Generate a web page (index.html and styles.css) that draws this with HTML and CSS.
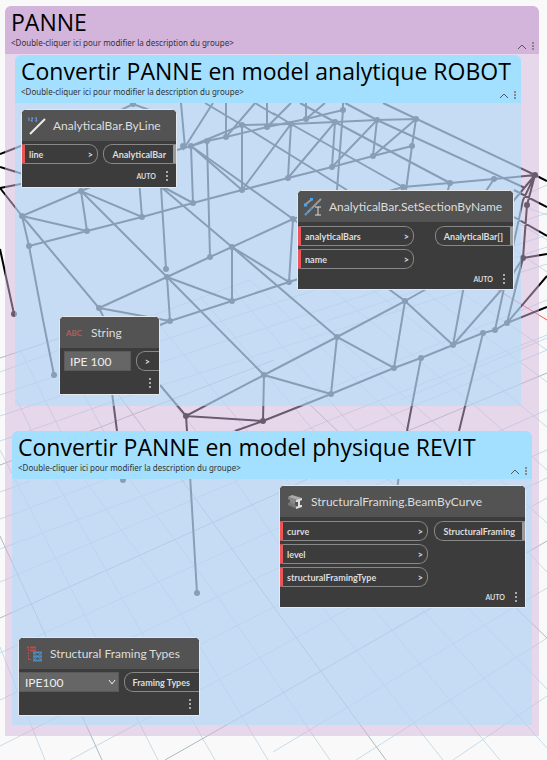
FILE: index.html
```
<!DOCTYPE html>
<html lang="fr">
<head>
<meta charset="utf-8">
<meta name="viewport" content="width=device-width, initial-scale=1">
<title>PANNE</title>
<link rel="stylesheet" href="styles.css">
</head>
<body>
<main class="workspace">
  <svg class="scene" viewBox="0 0 547 760" preserveAspectRatio="xMinYMin slice" aria-hidden="true">
    <g class="grid">
      <path d="M0 492L30 481M0 519L110 478L240 428M0 549L190 478L330 420L547 335M0 582L274 465L547 350M0 653L274 530L547 410M0 700L274 570L547 450M0 746L274 607L547 478M70 760L274 650L547 498M273 752L513 608L547 588M356 760L547 638M453 760L547 696"/>
      <path d="M0 441L140 392L547 264M0 416L120 376L547 235M0 395L140 348L300 295L547 213M0 372L140 320L250 280M300 330L547 247M300 400L547 300M400 400L547 338"/>
      <path d="M0 647L45 760M0 450L77 600L158 760M17 400L55 480L123 600L215 760M20 350L85 480L172 600L268 760M60 350L130 480L220 600L330 760M115 330L235 480L323 608L443 760M155 320L280 470L373 608L500 760M200 296L330 450L421 608L547 748M230 286L390 470L468 608L547 689M250 280L440 460L547 572M280 288L500 480L547 523M330 288L480 410L547 470M370 288L500 388L547 427M420 288L547 382M455 288L547 350M500 240L547 272M505 215L547 240M525 195L547 185M520 205L547 215"/>
    </g>
    <g class="grid grid-major">
      <path d="M0 618L274 495L410 430L547 373M165 760L274 698L431 608L547 541M0 465L93 430L274 360M0 358L60 338M0 536L34 610L102 760M100 370L182 480L273 606L386 760M305 400L410 500L516 608L547 638"/>
    </g>
    <path class="axis" d="M493 287L547 320"/>
    <g class="bars">
      <path d="M117 112L133 104L155 112M181 103L185 148M226 103V137M213 103L183 150M205 103L242 125L347 190M226 137L255 103L275 115M267 103V127L291 103M300 103L335 122L450 183M273 113L291 124L403 187M306 103V119L325 103M343 103V110M343 110L337 190M345 103L377 120L525 188M383 103L535 175"/>
      <path d="M177 150L191 146L207 141L226 137L267 127L306 119L343 110M191 146L242 125L291 124L335 122L377 120L416 119L412 146L406 190"/>
      <path d="M242 125V190L291 124L288 178L335 122L332 167L377 120L373 156L416 119"/>
      <path d="M29 246L87 231L142 217L193 203L242 190L288 178L332 167L373 156L412 146M191 146L193 203M207 141L210 257M191 146L242 190M191 146L293 219L405 301L453 345M22 216L81 191L100 183M22 216L87 231L81 191L142 217L139 180M161 187L166 269M161 187L232 247M150 180L193 203M81 191L167 277L264 375L331 394M22 216L99 308L105 320M22 216L29 246L43 320L54 375"/>
      <path d="M99 308L167 277L210 257L232 247L293 219L403 187L450 183L494 179L535 175M293 219L289 282L232 247V301L167 277L170 321L99 308M160 325L170 321L232 301L289 282L320 272M232 247L337 337L394 368L405 301L337 337L331 394M403 187L398 200M450 183L445 200M494 179L480 200M428 288L405 301M453 345L465 280M453 345L510 280M337 337L264 375L186 416L160 385M264 375L263 421L186 416L187 431M111 385L117 431M235 431L263 421L331 394L394 368L421 358L453 345L483 333L495 330L507 323L547 307M421 358L407 431M483 333L459 431M495 330L523 200L535 175M507 323L523 258L527 205L535 175L510 205M523 258L515 288M523 258L547 254M535 175L547 181M514 190L547 207M514 217L547 236M523 258L504 288M547 276L507 323"/>
      <path d="M0 154L26 144M0 167L26 175M0 188L26 183M0 188L22 216M0 249L14 314M190 475L197 593M399 475L397 490"/>
    </g>
    <g class="joints">
      <circle cx="133" cy="104" r="3"/><circle cx="183" cy="146" r="3"/><circle cx="191" cy="146" r="3"/><circle cx="207" cy="141" r="3"/><circle cx="226" cy="137" r="3"/><circle cx="242" cy="125" r="3"/><circle cx="267" cy="127" r="3"/><circle cx="291" cy="124" r="3"/><circle cx="306" cy="119" r="3"/><circle cx="343" cy="110" r="3"/><circle cx="335" cy="122" r="3"/><circle cx="377" cy="120" r="3"/><circle cx="416" cy="119" r="3"/><circle cx="412" cy="146" r="3"/><circle cx="373" cy="156" r="3"/><circle cx="332" cy="167" r="3"/><circle cx="288" cy="178" r="3"/><circle cx="242" cy="190" r="3"/><circle cx="193" cy="203" r="3"/><circle cx="142" cy="217" r="3"/><circle cx="87" cy="231" r="3"/><circle cx="29" cy="246" r="3"/><circle cx="22" cy="216" r="3"/><circle cx="81" cy="191" r="3"/><circle cx="166" cy="269" r="3"/><circle cx="167" cy="277" r="3"/><circle cx="210" cy="257" r="3"/><circle cx="232" cy="247" r="3"/><circle cx="232" cy="301" r="3"/><circle cx="99" cy="308" r="3"/><circle cx="170" cy="321" r="3"/><circle cx="289" cy="282" r="3"/><circle cx="293" cy="219" r="3"/><circle cx="403" cy="187" r="3"/><circle cx="450" cy="183" r="3"/><circle cx="494" cy="179" r="3"/><circle cx="535" cy="175" r="3"/><circle cx="527" cy="205" r="3"/><circle cx="523" cy="258" r="3"/><circle cx="405" cy="301" r="3"/><circle cx="337" cy="337" r="3"/><circle cx="264" cy="375" r="3"/><circle cx="331" cy="394" r="3"/><circle cx="394" cy="368" r="3"/><circle cx="421" cy="358" r="3"/><circle cx="453" cy="345" r="3"/><circle cx="483" cy="333" r="3"/><circle cx="495" cy="330" r="3"/><circle cx="507" cy="323" r="3"/><circle cx="186" cy="416" r="3"/><circle cx="263" cy="421" r="3"/><circle cx="54" cy="375" r="3"/><circle cx="14" cy="314" r="3"/><circle cx="197" cy="593" r="3"/><circle cx="123" cy="480" r="3"/>
    </g>
  </svg>

  <section class="group group-purlin">
    <header class="group-header">
      <h1 class="group-title">PANNE</h1>
      <p class="group-note">&lt;Double-cliquer ici pour modifier la description du groupe&gt;</p>
      <div class="group-tools">
        <button class="tool" type="button" aria-label="Réduire"><svg class="chevron" width="10" height="6" viewBox="0 0 10 6"><path d="M1 5L5 1L9 5"/></svg></button>
        <button class="tool" type="button" aria-label="Menu"><svg width="2" height="9" viewBox="0 0 2 9"><path d="M1 0V9" stroke-dasharray="2 1"/></svg></button>
      </div>
    </header>
    <div class="group-body">

      <section class="group group-robot">
        <header class="group-header">
          <h2 class="group-title">Convertir PANNE en model analytique ROBOT</h2>
          <p class="group-note">&lt;Double-cliquer ici pour modifier la description du groupe&gt;</p>
          <div class="group-tools">
            <button class="tool" type="button" aria-label="Réduire"><svg class="chevron" width="10" height="6" viewBox="0 0 10 6"><path d="M1 5L5 1L9 5"/></svg></button>
            <button class="tool" type="button" aria-label="Menu"><svg width="2" height="9" viewBox="0 0 2 9"><path d="M1 0V9" stroke-dasharray="2 1"/></svg></button>
          </div>
        </header>
        <div class="group-body">
          <article class="node node-single node-byline">
            <header class="node-header">
              <svg class="node-icon" width="18" height="18" viewBox="0 0 18 18" fill="none"><path d="M2 17L17 2" stroke="#eee" stroke-width="2"/><path d="M0 1H1V4M3 1H5L3 4H5M7 1H9L8 2L9 4H7" stroke="#6c9be8"/></svg>
              <h3 class="node-title">AnalyticalBar.ByLine</h3>
            </header>
            <div class="ports">
              <div class="inputs"><div class="port port-in"><span>line</span><span>&gt;</span></div></div>
              <div class="outputs"><div class="port port-out">AnalyticalBar</div></div>
            </div>
            <footer class="node-footer"><span>AUTO</span><button class="tool tool-node" type="button" aria-label="Options"><svg width="2" height="10" viewBox="0 0 2 10"><path d="M1 0V10" stroke-dasharray="2 2"/></svg></button></footer>
          </article>

          <article class="node node-section">
            <header class="node-header">
              <svg class="node-icon" width="18" height="18" viewBox="0 0 18 18" fill="none"><path d="M1 7L8 1M1 17L17 1" stroke="#999" stroke-width="2"/><path d="M0 7H3M6 1H9" stroke="#46a5f2" stroke-width="3"/><path d="M1 17L4 14M6 12L8 10" stroke="#4a90d0" stroke-width="2"/><path d="M11 9H17M14 9V17M11 17H17" stroke="#ddd"/></svg>
              <h3 class="node-title">AnalyticalBar.SetSectionByName</h3>
            </header>
            <div class="ports">
              <div class="inputs">
                <div class="port port-in"><span>analyticalBars</span><span>&gt;</span></div>
                <div class="port port-in"><span>name</span><span>&gt;</span></div>
              </div>
              <div class="outputs"><div class="port port-out">AnalyticalBar[]</div></div>
            </div>
            <footer class="node-footer"><span>AUTO</span><button class="tool tool-node" type="button" aria-label="Options"><svg width="2" height="10" viewBox="0 0 2 10"><path d="M1 0V10" stroke-dasharray="2 2"/></svg></button></footer>
          </article>

          <article class="node node-single node-string">
            <header class="node-header">
              <span class="node-abc">ABC</span>
              <h3 class="node-title">String</h3>
            </header>
            <div class="ports">
              <input class="field" type="text" value="IPE 100" aria-label="String">
              <div class="outputs"><div class="port port-open">&gt;</div></div>
            </div>
            <footer class="node-footer"><button class="tool tool-node" type="button" aria-label="Options"><svg width="2" height="10" viewBox="0 0 2 10"><path d="M1 0V10" stroke-dasharray="2 2"/></svg></button></footer>
          </article>
        </div>
      </section>

      <section class="group group-revit">
        <header class="group-header">
          <h2 class="group-title">Convertir PANNE en model physique REVIT</h2>
          <p class="group-note">&lt;Double-cliquer ici pour modifier la description du groupe&gt;</p>
          <div class="group-tools">
            <button class="tool" type="button" aria-label="Réduire"><svg class="chevron" width="10" height="6" viewBox="0 0 10 6"><path d="M1 5L5 1L9 5"/></svg></button>
            <button class="tool" type="button" aria-label="Menu"><svg width="2" height="9" viewBox="0 0 2 9"><path d="M1 0V9" stroke-dasharray="2 1"/></svg></button>
          </div>
        </header>
        <div class="group-body">
          <article class="node node-beam">
            <header class="node-header">
              <svg class="node-icon" width="18" height="16" viewBox="0 0 18 16"><path d="M2 3L6 1L16 4L11 6Z" fill="#aaa"/><path d="M2 3L11 6V8L9 8V12L4 10V6L2 5Z" fill="#888"/><path d="M2 9L4 8L11 12V15L2 11Z" fill="#777"/><path d="M10 6L16 4V6L14 7V11L16 11V13L10 15V13L12 12V8L10 8Z" fill="#ddd"/></svg>
              <h3 class="node-title">StructuralFraming.BeamByCurve</h3>
            </header>
            <div class="ports">
              <div class="inputs">
                <div class="port port-in"><span>curve</span><span>&gt;</span></div>
                <div class="port port-in"><span>level</span><span>&gt;</span></div>
                <div class="port port-in"><span>structuralFramingType</span><span>&gt;</span></div>
              </div>
              <div class="outputs"><div class="port port-out">StructuralFraming</div></div>
            </div>
            <footer class="node-footer"><span>AUTO</span><button class="tool tool-node" type="button" aria-label="Options"><svg width="2" height="10" viewBox="0 0 2 10"><path d="M1 0V10" stroke-dasharray="2 2"/></svg></button></footer>
          </article>

          <article class="node node-single node-types">
            <header class="node-header">
              <svg class="node-icon" width="18" height="16" viewBox="0 0 18 16" fill="none"><path d="M2 1.500H4M5 1.500H11M5 4.500H11" stroke="#b94c4c" stroke-width="2"/><path d="M3.500 3V14M4 13.500H7" stroke="#b94c4c" stroke-dasharray="2 1"/><path d="M8 6.500H17M8 14.500H17M8 10.500H17" stroke="#4b8bc4" stroke-width="2"/><path d="M9 7V14M16 7V14M9 7L16 14M16 7L9 14" stroke="#4b8bc4"/></svg>
              <h3 class="node-title">Structural Framing Types</h3>
            </header>
            <div class="ports">
              <div class="select-wrap">
                <select class="field field-select" aria-label="Structural Framing Types"><option>IPE100</option></select>
                <svg class="select-arrow" width="8" height="6" viewBox="0 0 8 6"><path d="M1 1L4 5L7 1"/></svg>
              </div>
              <div class="outputs"><div class="port port-open">Framing Types</div></div>
            </div>
            <footer class="node-footer"><button class="tool tool-node" type="button" aria-label="Options"><svg width="2" height="10" viewBox="0 0 2 10"><path d="M1 0V10" stroke-dasharray="2 2"/></svg></button></footer>
          </article>
        </div>
      </section>

    </div>
  </section>
</main>
</body>
</html>
```
FILE: styles.css
```
* { box-sizing: border-box; }

body {
  margin: 0;
  background: #f9f9f9;
  font-family: "Open Sans", "Noto Sans", sans-serif;
}

h1, h2, h3, p { margin: 0; }

.workspace {
  position: relative;
  min-height: 100vh;
  padding: 6px 8px 24px 5px;
  overflow: hidden;
}

/* Background 3D preview */
.scene {
  position: absolute;
  inset: 0;
  width: 100%;
  height: 100%;
}

.grid { fill: none; stroke: #c6dce9; stroke-width: 1; }
.grid-major { stroke: #a9bac6; }
.axis { stroke: #ff5050; }
.bars { fill: none; stroke: #000; stroke-width: 2; }
.joints { fill: #000; }

/* Groups */
.group { position: relative; }

.group-header {
  position: relative;
  height: 48px;
  padding: 0 6px;
  border-radius: 6px 6px 0 0;
}

.group-title {
  font-size: 23px;
  font-weight: 400;
  line-height: 32px;
  white-space: nowrap;
  color: #000;
}

.group-note {
  font-family: "Noto Sans", "Open Sans", sans-serif;
  font-size: 8px;
  line-height: 10px;
  color: #333;
}

.group-tools {
  position: absolute;
  right: 5px;
  bottom: 3px;
  display: flex;
  align-items: center;
  gap: 5px;
}

.tool {
  display: flex;
  align-items: center;
  padding: 0;
  border: 0;
  background: none;
}

.tool svg { fill: none; stroke: #888; stroke-width: 2; }
.tool .chevron { stroke: #555; stroke-width: 1; }

.group-purlin > .group-header { background: #d3b5db; }
.group-purlin > .group-body {
  padding: 1px 7px 11px;
  background: rgba(211, 181, 219, 0.5);
}

.group-robot { margin: 0 11px 25px 3px; }

.group-robot > .group-header,
.group-revit > .group-header { background: #a3e0ff; }

.group-robot > .group-body,
.group-revit > .group-body { background: rgba(166, 225, 254, 0.5); }

.group-robot > .group-body { height: 303px; }
.group-revit > .group-body { height: 246px; }

/* Nodes placed on the canvas */
.node {
  position: absolute;
  border: 1px solid #e6e9ec;
  border-radius: 5px 5px 0 0;
  background: #3c3c3c;
  color: #ddd;
  font-family: Lato, Roboto, sans-serif;
}

.node-byline { left: 6px; top: 54px; width: 156px; }
.node-section { left: 282px; top: 135px; width: 217px; }
.node-string { left: 44px; top: 261px; width: 101px; }
.node-beam { left: 267px; top: 54px; width: 247px; }
.node-types { left: 6px; top: 206px; width: 182px; }

.node-header {
  display: flex;
  align-items: center;
  gap: 7px;
  height: 31px;
  padding: 0 6px;
  border-radius: 4px 4px 0 0;
  background: #535353;
}

.node-icon { flex: none; }

.node-title {
  font-size: 12px;
  font-weight: 400;
  line-height: 16px;
  white-space: nowrap;
}

.node-abc {
  width: 18px;
  font-size: 8px;
  font-weight: 700;
  color: #b06060;
}

.ports {
  display: flex;
  justify-content: space-between;
  align-items: flex-start;
  padding-top: 4px;
}

.node-single .ports { padding-top: 3px; }

.inputs {
  display: grid;
  gap: 3px;
}

.port {
  display: flex;
  align-items: center;
  justify-content: space-between;
  height: 20px;
  border: 1px solid #888;
  font-size: 9px;
  font-weight: 700;
  white-space: nowrap;
}

.port-in {
  padding: 0 4px;
  border-left: 3px solid #eb5555;
  border-radius: 0 9px 9px 0;
}

.port-out {
  justify-content: flex-end;
  padding: 0 7px 0 8px;
  border-right: 3px solid #999;
  border-radius: 9px 0 0 9px;
}

.port-open {
  padding: 0 9px 0 8px;
  border-right: 0;
  border-radius: 9px 0 0 9px;
}

.node-byline .inputs { width: 76px; }
.node-section .inputs { width: 116px; }
.node-beam .inputs { width: 148px; }

.node-footer {
  display: flex;
  align-items: center;
  justify-content: flex-end;
  gap: 10px;
  height: 20px;
  padding-right: 8px;
  font-size: 7px;
  font-weight: 700;
}

.node-single .node-footer { height: 23px; }

.tool-node svg { stroke: #aaa; }

.field {
  height: 20px;
  padding: 0 5px;
  border: 1px solid #5a5a5a;
  border-radius: 0;
  background: #666;
  color: #eee;
  font-family: inherit;
  font-size: 12px;
}

.node-string .field { width: 67px; margin-left: 4px; }

.select-wrap { position: relative; display: flex; width: 100px; }

.field-select {
  width: 100%;
  appearance: none;
}

.select-arrow {
  position: absolute;
  right: 3px;
  top: 7px;
  fill: none;
  stroke: #eee;
  pointer-events: none;
}
```
